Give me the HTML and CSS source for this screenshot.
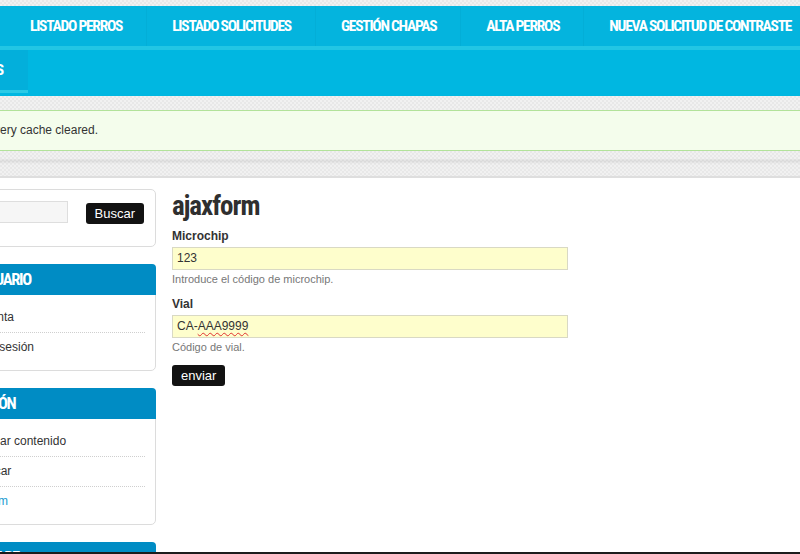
FILE: index.html
```html
<!DOCTYPE html>
<html lang="es">
<head>
<meta charset="utf-8">
<title>ajaxform</title>
<link rel="stylesheet" href="styles.css">
</head>
<body>
<div class="viewport">
  <div class="top-strip"></div>
  <nav class="main-nav">
    <ul class="nav-primary">
      <li><a href="#">LISTADO PERROS</a></li>
      <li><a href="#">LISTADO SOLICITUDES</a></li>
      <li><a href="#">GESTIÓN CHAPAS</a></li>
      <li><a href="#">ALTA PERROS</a></li>
      <li><a href="#">NUEVA SOLICITUD DE CONTRASTE</a></li>
    </ul>
  </nav>
  <div class="nav-divider"></div>
  <div class="sub-nav">
    <ul class="nav-secondary">
      <li class="active"><a href="#">PERROS</a></li>
    </ul>
  </div>
  <div class="messages-area">
    <div class="message">Every cache cleared.</div>
  </div>
  <div class="shadow-band"></div>
  <div class="layout">
    <aside class="sidebar">
      <div class="block block-search">
        <div class="search-input"></div>
        <button class="btn" type="button">Buscar</button>
      </div>
      <div class="block">
        <h2 class="block-title">USUARIO</h2>
        <ul class="menu">
          <li><a href="#">Mi cuenta</a></li>
          <li><a href="#">Cerrar sesión</a></li>
        </ul>
      </div>
      <div class="block">
        <h2 class="block-title block-title--nav">NAVEGACIÓN</h2>
        <ul class="menu">
          <li><a href="#">Modificar contenido</a></li>
          <li><a href="#">Clasificar</a></li>
          <li><a href="#" class="active-link">ajaxform</a></li>
        </ul>
      </div>
      <div class="block">
        <h2 class="block-title">SHARE</h2>
      </div>
    </aside>
    <main class="content">
      <h1 class="page-title">ajaxform</h1>
      <div class="form-item">
        <label class="form-label">Microchip</label>
        <div class="form-input">123</div>
        <div class="form-desc">Introduce el código de microchip.</div>
      </div>
      <div class="form-item">
        <label class="form-label">Vial</label>
        <div class="form-input">CA-<span class="misspelled">AAA9999</span></div>
        <div class="form-desc">Código de vial.</div>
      </div>
      <button class="btn" type="button">enviar</button>
    </main>
  </div>
</div>
</body>
</html>
```

FILE: styles.css
```css
* { box-sizing: border-box; }
html, body { margin: 0; padding: 0; }
body {
  font-family: "Liberation Sans", Arial, sans-serif;
  font-size: 12px;
  color: #333;
  background: #fff;
  overflow: hidden;
}
a { text-decoration: none; color: inherit; }
ul { list-style: none; margin: 0; padding: 0; }

.viewport {
  height: 554px;
  overflow: hidden;
  border-bottom: 2px solid #1c1c1c;
  background: #fff;
}

.top-strip, .messages-area, .shadow-band {
  background-color: #ececec;
  background-image: repeating-conic-gradient(#e8e8e8 0 25%, #f1f1f1 0 50%);
  background-size: 4px 4px;
}
.top-strip { height: 6px; }

.main-nav {
  height: 40px;
  background: #04b4de;
}
.nav-primary {
  display: flex;
  height: 40px;
  padding-left: 5px;
}
.nav-primary li a {
  display: block;
  height: 40px;
  line-height: 41px;
  padding: 0 25px;
  font-family: Roboto, "DejaVu Sans Condensed", sans-serif;
  font-stretch: 75%;
  font-weight: bold;
  font-size: 15.5px;
  letter-spacing: -1.25px;
  color: #fff;
  white-space: nowrap;
  box-shadow: inset -1px 0 0 rgba(0, 0, 0, 0.03);
}
.nav-divider { height: 4px; background: #22c6e4; }

.sub-nav {
  height: 46px;
  background: #00b7e1;
}
.nav-secondary {
  display: flex;
  justify-content: flex-end;
  width: 28px;
}
.nav-secondary li a {
  display: block;
  height: 43px;
  line-height: 41px;
  padding: 0 25px;
  font-family: Roboto, "DejaVu Sans Condensed", sans-serif;
  font-stretch: 75%;
  font-weight: bold;
  font-size: 15.5px;
  letter-spacing: -1.25px;
  color: #fff;
  white-space: nowrap;
  background: #03afdb;
  border-bottom: 3px solid #2bcae6;
}

.messages-area { padding-top: 14px; }
.message {
  height: 41px;
  margin-left: -60px;
  padding-left: 46px;
  line-height: 39px;
  background: #f4fdec;
  border-top: 1px solid #b2e29a;
  border-bottom: 1px solid #b2e29a;
  color: #333;
  font-size: 12px;
}
.shadow-band {
  height: 27px;
  background-image:
    linear-gradient(to bottom, transparent 0 8px, rgba(0,0,0,0.025) 8px, rgba(0,0,0,0.07) 10px, rgba(0,0,0,0.025) 12px, transparent 13px, transparent 25px, #dedede 25px, #dedede 27px),
    repeating-conic-gradient(#e8e8e8 0 25%, #f1f1f1 0 50%);
  background-size: 100% 100%, 4px 4px;
}

.layout {
  display: flex;
  gap: 16px;
  padding-top: 11px;
}

.sidebar {
  width: 226px;
  margin-left: -70px;
  flex-shrink: 0;
}
.block {
  border: 1px solid #dcdcdc;
  border-radius: 5px;
  margin-bottom: 17px;
  background: #fff;
}
.block-search {
  display: flex;
  align-items: flex-start;
  gap: 18px;
  padding: 11px 11px 22px 11px;
}
.search-input {
  width: 126px;
  height: 22px;
  background: #f6f6f6;
  border: 1px solid #dedede;
}
.block-search .btn { margin-top: 2px; }

.btn {
  display: inline-block;
  height: 21px;
  line-height: 21px;
  padding: 0 9px;
  border: 0;
  border-radius: 3px;
  background: #121212;
  color: #fff;
  font-family: "Liberation Sans", Arial, sans-serif;
  font-size: 13px;
  cursor: pointer;
}

.block-title {
  margin: -1px -1px 0 -1px;
  height: 31px;
  line-height: 32px;
  padding-left: 49px;
  background: #008cc4;
  border-radius: 4px 4px 0 0;
  color: #fff;
  font-family: Roboto, "DejaVu Sans Condensed", sans-serif;
  font-stretch: 75%;
  font-weight: bold;
  font-size: 16.5px;
  letter-spacing: -1.3px;
  white-space: nowrap;
}
.block-title--nav { padding-left: 8px; }
.menu { padding: 8px 10px 8px 31px; }
.menu li {
  padding: 7px 0;
  line-height: 15px;
  font-size: 12px;
  border-bottom: 1px dotted #cfcfcf;
}
.menu li:last-child { border-bottom: 0; }
.menu .active-link { color: #1b9cd1; }

.content { flex: 1; }
.page-title {
  margin: 1px 0 0 0;
  height: 32px;
  line-height: 32px;
  font-family: Roboto, "DejaVu Sans Condensed", sans-serif;
  font-stretch: 75%;
  font-weight: bold;
  font-size: 27px;
  letter-spacing: -1px;
  color: #2f2f2f;
}
.form-item { margin-top: 7px; margin-bottom: 11px; }
.form-item + .form-item { margin-top: 0; }
.form-label {
  display: block;
  font-weight: bold;
  font-size: 12px;
  line-height: 15px;
  margin-bottom: 3px;
}
.form-input {
  width: 396px;
  height: 23px;
  line-height: 21px;
  padding-left: 4px;
  background: #fefecc;
  border: 1px solid #d9d9c4;
  font-size: 12px;
  color: #333;
}
.misspelled {
  text-decoration: underline wavy #e03030;
  text-decoration-thickness: 1px;
  text-underline-offset: 2px;
}
.form-desc {
  margin-top: 2px;
  line-height: 14px;
  font-size: 11px;
  color: #777;
}
```
